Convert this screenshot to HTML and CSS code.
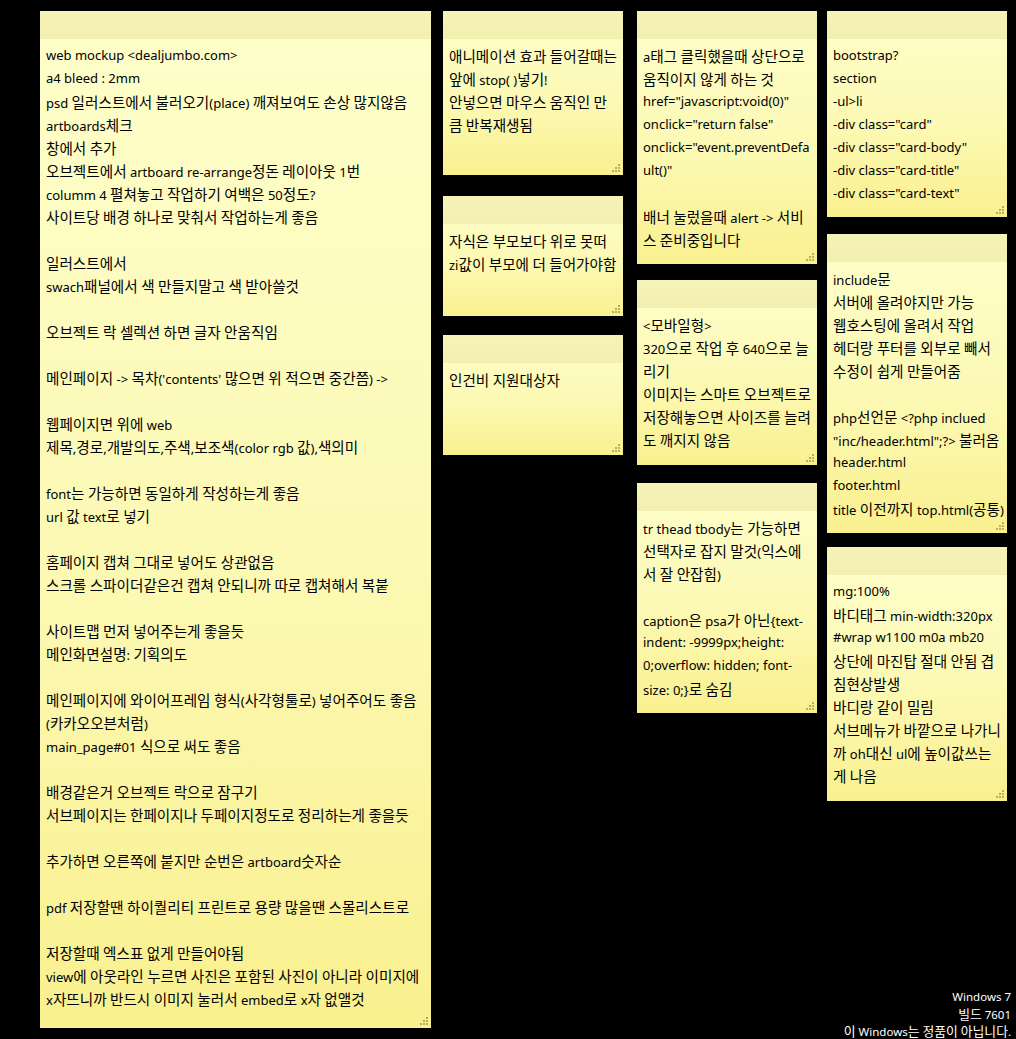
FILE: index.html
```html
<!DOCTYPE html>
<html lang="ko">
<head>
<meta charset="utf-8">
<title>Sticky Notes</title>
<link rel="stylesheet" href="styles.css">
<script src="script.js" defer></script>
</head>
<body>
<div class="desktop">
  <div class="col col-1">
    <div class="note note-1">
      <div class="note-head"></div>
      <div class="note-body">
        <div class="ln">web mockup &lt;dealjumbo.com&gt;</div>
        <div class="ln">a4 bleed : 2mm</div>
        <div class="ln">psd 일러스트에서 불러오기(place) 깨져보여도 손상 많지않음</div>
        <div class="ln">artboards체크</div>
        <div class="ln">창에서 추가</div>
        <div class="ln">오브젝트에서 artboard re-arrange정돈 레이아웃 1번</div>
        <div class="ln">columm 4 펼쳐놓고 작업하기 여백은 50정도?</div>
        <div class="ln">사이트당 배경 하나로 맞춰서 작업하는게 좋음</div>
        <div class="ln"></div>
        <div class="ln">일러스트에서</div>
        <div class="ln">swach패널에서 색 만들지말고 색 받아쓸것</div>
        <div class="ln"></div>
        <div class="ln">오브젝트 락 셀렉션 하면 글자 안움직임</div>
        <div class="ln"></div>
        <div class="ln">메인페이지 -&gt; 목차('contents' 많으면 위 적으면 중간쯤) -&gt;</div>
        <div class="ln"></div>
        <div class="ln">웹페이지면 위에 web</div>
        <div class="ln">제목,경로,개발의도,주색,보조색(color rgb 값),색의미</div>
        <div class="ln"></div>
        <div class="ln">font는 가능하면 동일하게 작성하는게 좋음</div>
        <div class="ln">url 값 text로 넣기</div>
        <div class="ln"></div>
        <div class="ln">홈페이지 캡쳐 그대로 넣어도 상관없음</div>
        <div class="ln">스크롤 스파이더같은건 캡쳐 안되니까 따로 캡쳐해서 복붙</div>
        <div class="ln"></div>
        <div class="ln">사이트맵 먼저 넣어주는게 좋을듯</div>
        <div class="ln">메인화면설명: 기획의도</div>
        <div class="ln"></div>
        <div class="ln">메인페이지에 와이어프레임 형식(사각형툴로) 넣어주어도 좋음</div>
        <div class="ln">(카카오오븐처럼)</div>
        <div class="ln">main_page#01 식으로 써도 좋음</div>
        <div class="ln"></div>
        <div class="ln">배경같은거 오브젝트 락으로 잠구기</div>
        <div class="ln">서브페이지는 한페이지나 두페이지정도로 정리하는게 좋을듯</div>
        <div class="ln"></div>
        <div class="ln">추가하면 오른쪽에 붙지만 순번은 artboard숫자순</div>
        <div class="ln"></div>
        <div class="ln">pdf 저장할땐 하이퀄리티 프린트로 용량 많을땐 스몰리스트로</div>
        <div class="ln"></div>
        <div class="ln">저장할때 엑스표 없게 만들어야됨</div>
        <div class="ln">view에 아웃라인 누르면 사진은 포함된 사진이 아니라 이미지에</div>
        <div class="ln">x자뜨니까 반드시 이미지 눌러서 embed로 x자 없앨것</div>
      </div>
      <svg class="grip" width="9" height="9" viewBox="0 0 9 9"><g fill="#b8ae5e"><rect x="6" y="0" width="2" height="2"/><rect x="3" y="3" width="2" height="2"/><rect x="6" y="3" width="2" height="2"/><rect x="0" y="6" width="2" height="2"/><rect x="3" y="6" width="2" height="2"/><rect x="6" y="6" width="2" height="2"/></g></svg>
    </div>
  </div>

  <div class="col col-2">
    <div class="note note-a">
      <div class="note-head"></div>
      <div class="note-body">
        <div class="ln">애니메이션 효과 들어갈때는</div>
        <div class="ln">앞에 stop( )넣기!</div>
        <div class="ln">안넣으면 마우스 움직인 만</div>
        <div class="ln">큼 반복재생됨</div>
      </div>
      <svg class="grip" width="9" height="9" viewBox="0 0 9 9"><g fill="#b8ae5e"><rect x="6" y="0" width="2" height="2"/><rect x="3" y="3" width="2" height="2"/><rect x="6" y="3" width="2" height="2"/><rect x="0" y="6" width="2" height="2"/><rect x="3" y="6" width="2" height="2"/><rect x="6" y="6" width="2" height="2"/></g></svg>
    </div>
    <div class="note note-b">
      <div class="note-head"></div>
      <div class="note-body">
        <div class="ln">자식은 부모보다 위로 못떠</div>
        <div class="ln">zi값이 부모에 더 들어가야함</div>
      </div>
      <svg class="grip" width="9" height="9" viewBox="0 0 9 9"><g fill="#b8ae5e"><rect x="6" y="0" width="2" height="2"/><rect x="3" y="3" width="2" height="2"/><rect x="6" y="3" width="2" height="2"/><rect x="0" y="6" width="2" height="2"/><rect x="3" y="6" width="2" height="2"/><rect x="6" y="6" width="2" height="2"/></g></svg>
    </div>
    <div class="note note-c">
      <div class="note-head"></div>
      <div class="note-body">
        <div class="ln">인건비 지원대상자</div>
      </div>
      <svg class="grip" width="9" height="9" viewBox="0 0 9 9"><g fill="#b8ae5e"><rect x="6" y="0" width="2" height="2"/><rect x="3" y="3" width="2" height="2"/><rect x="6" y="3" width="2" height="2"/><rect x="0" y="6" width="2" height="2"/><rect x="3" y="6" width="2" height="2"/><rect x="6" y="6" width="2" height="2"/></g></svg>
    </div>
  </div>

  <div class="col col-3">
    <div class="note note-d">
      <div class="note-head"></div>
      <div class="note-body">
        <div class="ln">a태그 클릭했을때 상단으로</div>
        <div class="ln">움직이지 않게 하는 것</div>
        <div class="ln">href="javascript:void(0)"</div>
        <div class="ln">onclick="return false"</div>
        <div class="ln">onclick="event.preventDefa</div>
        <div class="ln">ult()"</div>
        <div class="ln"></div>
        <div class="ln">배너 눌렀을때 alert -&gt; 서비</div>
        <div class="ln">스 준비중입니다</div>
      </div>
      <svg class="grip" width="9" height="9" viewBox="0 0 9 9"><g fill="#b8ae5e"><rect x="6" y="0" width="2" height="2"/><rect x="3" y="3" width="2" height="2"/><rect x="6" y="3" width="2" height="2"/><rect x="0" y="6" width="2" height="2"/><rect x="3" y="6" width="2" height="2"/><rect x="6" y="6" width="2" height="2"/></g></svg>
    </div>
    <div class="note note-e">
      <div class="note-head"></div>
      <div class="note-body">
        <div class="ln">&lt;모바일형&gt;</div>
        <div class="ln">320으로 작업 후 640으로 늘</div>
        <div class="ln">리기</div>
        <div class="ln">이미지는 스마트 오브젝트로</div>
        <div class="ln">저장해놓으면 사이즈를 늘려</div>
        <div class="ln">도 깨지지 않음</div>
      </div>
      <svg class="grip" width="9" height="9" viewBox="0 0 9 9"><g fill="#b8ae5e"><rect x="6" y="0" width="2" height="2"/><rect x="3" y="3" width="2" height="2"/><rect x="6" y="3" width="2" height="2"/><rect x="0" y="6" width="2" height="2"/><rect x="3" y="6" width="2" height="2"/><rect x="6" y="6" width="2" height="2"/></g></svg>
    </div>
    <div class="note note-f">
      <div class="note-head"></div>
      <div class="note-body">
        <div class="ln">tr thead tbody는 가능하면</div>
        <div class="ln">선택자로 잡지 말것(익스에</div>
        <div class="ln">서 잘 안잡힘)</div>
        <div class="ln"></div>
        <div class="ln">caption은 psa가 아닌{text-</div>
        <div class="ln">indent: -9999px;height:</div>
        <div class="ln">0;overflow: hidden; font-</div>
        <div class="ln">size: 0;}로 숨김</div>
      </div>
      <svg class="grip" width="9" height="9" viewBox="0 0 9 9"><g fill="#b8ae5e"><rect x="6" y="0" width="2" height="2"/><rect x="3" y="3" width="2" height="2"/><rect x="6" y="3" width="2" height="2"/><rect x="0" y="6" width="2" height="2"/><rect x="3" y="6" width="2" height="2"/><rect x="6" y="6" width="2" height="2"/></g></svg>
    </div>
  </div>

  <div class="col col-4">
    <div class="note note-g">
      <div class="note-head"></div>
      <div class="note-body">
        <div class="ln">bootstrap?</div>
        <div class="ln">section</div>
        <div class="ln">-ul&gt;li</div>
        <div class="ln">-div class="card"</div>
        <div class="ln">-div class="card-body"</div>
        <div class="ln">-div class="card-title"</div>
        <div class="ln">-div class="card-text"</div>
      </div>
      <svg class="grip" width="9" height="9" viewBox="0 0 9 9"><g fill="#b8ae5e"><rect x="6" y="0" width="2" height="2"/><rect x="3" y="3" width="2" height="2"/><rect x="6" y="3" width="2" height="2"/><rect x="0" y="6" width="2" height="2"/><rect x="3" y="6" width="2" height="2"/><rect x="6" y="6" width="2" height="2"/></g></svg>
    </div>
    <div class="note note-h">
      <div class="note-head"></div>
      <div class="note-body">
        <div class="ln">include문</div>
        <div class="ln">서버에 올려야지만 가능</div>
        <div class="ln">웹호스팅에 올려서 작업</div>
        <div class="ln">헤더랑 푸터를 외부로 빼서</div>
        <div class="ln">수정이 쉽게 만들어줌</div>
        <div class="ln"></div>
        <div class="ln">php선언문 &lt;?php inclued</div>
        <div class="ln">"inc/header.html";?&gt; 불러옴</div>
        <div class="ln">header.html</div>
        <div class="ln">footer.html</div>
        <div class="ln">title 이전까지 top.html(공통)</div>
      </div>
      <svg class="grip" width="9" height="9" viewBox="0 0 9 9"><g fill="#b8ae5e"><rect x="6" y="0" width="2" height="2"/><rect x="3" y="3" width="2" height="2"/><rect x="6" y="3" width="2" height="2"/><rect x="0" y="6" width="2" height="2"/><rect x="3" y="6" width="2" height="2"/><rect x="6" y="6" width="2" height="2"/></g></svg>
    </div>
    <div class="note note-i">
      <div class="note-head"></div>
      <div class="note-body">
        <div class="ln">mg:100%</div>
        <div class="ln">바디태그 min-width:320px</div>
        <div class="ln">#wrap w1100 m0a mb20</div>
        <div class="ln">상단에 마진탑 절대 안됨 겹</div>
        <div class="ln">침현상발생</div>
        <div class="ln">바디랑 같이 밀림</div>
        <div class="ln">서브메뉴가 바깥으로 나가니</div>
        <div class="ln">까 oh대신 ul에 높이값쓰는</div>
        <div class="ln">게 나음</div>
      </div>
      <svg class="grip" width="9" height="9" viewBox="0 0 9 9"><g fill="#b8ae5e"><rect x="6" y="0" width="2" height="2"/><rect x="3" y="3" width="2" height="2"/><rect x="6" y="3" width="2" height="2"/><rect x="0" y="6" width="2" height="2"/><rect x="3" y="6" width="2" height="2"/><rect x="6" y="6" width="2" height="2"/></g></svg>
    </div>
  </div>
</div>

<div class="watermark">
  <div class="wm-line">Windows 7</div>
  <div class="wm-line">빌드 7601</div>
  <div class="wm-line">이 Windows는 정품이 아닙니다.</div>
</div>
</body>
</html>
```

FILE: script.js
```js
(function () {
  var HANGUL = /[\u1100-\u11FF\u3130-\u318F\uAC00-\uD7AF]+/g;
  var roots = document.querySelectorAll('.note-body, .watermark');
  roots.forEach(function (root) {
    var walker = document.createTreeWalker(root, NodeFilter.SHOW_TEXT);
    var nodes = [];
    while (walker.nextNode()) nodes.push(walker.currentNode);
    nodes.forEach(function (node) {
      var text = node.nodeValue;
      HANGUL.lastIndex = 0;
      if (!HANGUL.test(text)) return;
      HANGUL.lastIndex = 0;
      var frag = document.createDocumentFragment();
      var last = 0;
      var m;
      while ((m = HANGUL.exec(text)) !== null) {
        if (m.index > last) frag.appendChild(document.createTextNode(text.slice(last, m.index)));
        var span = document.createElement('span');
        span.className = 'ko';
        span.textContent = m[0];
        frag.appendChild(span);
        last = m.index + m[0].length;
      }
      if (last < text.length) frag.appendChild(document.createTextNode(text.slice(last)));
      node.parentNode.replaceChild(frag, node);
    });
  });
})();
```

FILE: styles.css
```css
html, body {
  margin: 0;
  padding: 0;
}

body {
  background: #000;
  width: 1016px;
  height: 1039px;
  overflow: hidden;
  position: relative;
  font-family: "Noto Sans", "Noto Sans CJK KR", sans-serif;
}

.desktop {
  display: flex;
  align-items: flex-start;
  padding: 11px 0 0 40px;
}

.col {
  display: flex;
  flex-direction: column;
  width: 180px;
}

.col-1 { width: 391px; }
.col-2 { margin-left: 12px; }
.col-3 { margin-left: 14px; }
.col-4 { margin-left: 10px; }

.note {
  position: relative;
  background: linear-gradient(to bottom, #fefeca 0%, #fcf9b4 55%, #f9f08f 100%);
  overflow: hidden;
}

.note-head {
  height: 28px;
  background: linear-gradient(to bottom, #f6f3b8, #f3efaf);
}

.note-body {
  padding: 5px 6px 0 6px;
  font-size: 13px;
  line-height: 23px;
  color: #000;
  white-space: nowrap;
}

.note-body .ko {
  font-family: "Noto Sans CJK KR", sans-serif;
  font-size: 14.6px;
}

.ln {
  height: 23px;
}

.grip {
  position: absolute;
  right: 2px;
  bottom: 2px;
}

.note-1 { height: 1017px; }

.note-a { height: 164px; }
.note-b { height: 120px; margin-top: 21px; }
.note-c { height: 120px; margin-top: 19px; }

.note-d { height: 253px; }
.note-e { height: 185px; margin-top: 16px; }
.note-f { height: 230px; margin-top: 18px; }

.note-g { height: 206px; }
.note-h { height: 299px; margin-top: 17px; }
.note-i { height: 254px; margin-top: 14px; }

.watermark {
  position: absolute;
  right: 5px;
  bottom: 0;
  color: #fff;
  font-size: 11.5px;
  line-height: 17px;
  text-align: right;
  white-space: nowrap;
}

.wm-line {
  height: 17px;
}

.watermark .ko {
  font-family: "Noto Sans CJK KR", sans-serif;
  font-size: 12.8px;
}
```
